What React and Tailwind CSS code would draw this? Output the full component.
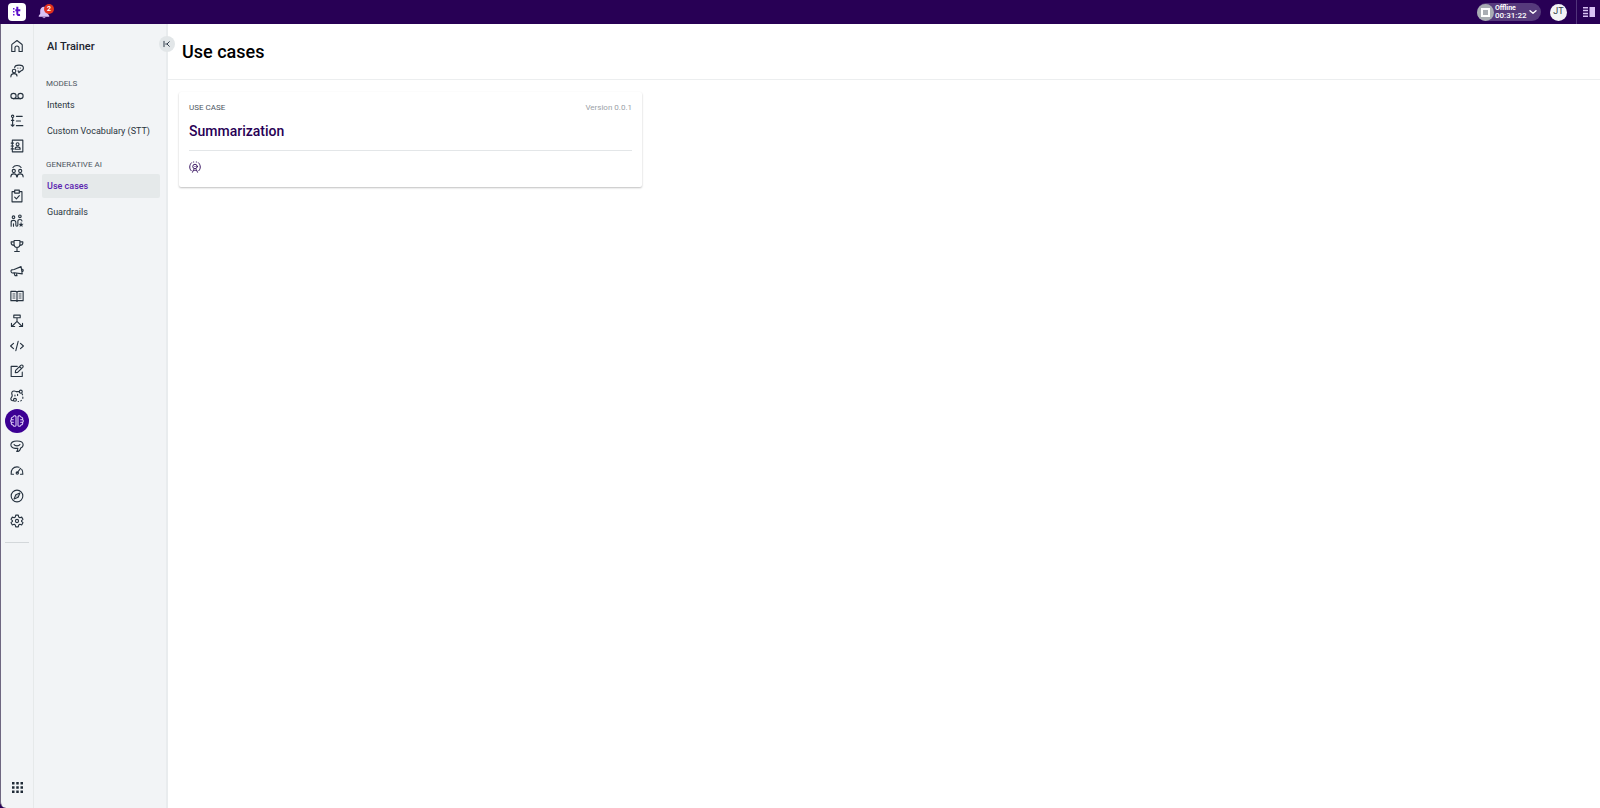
import React from "react";

function Icon({ children, className = "size-3.5", strokeWidth = 1.9 }) {
  return (
    <svg
      viewBox="0 0 24 24"
      className={className}
      fill="none"
      stroke="currentColor"
      strokeWidth={strokeWidth}
      strokeLinecap="round"
      strokeLinejoin="round"
      aria-hidden="true"
    >
      {children}
    </svg>
  );
}

const railItems = [
  {
    label: "Home",
    icon: <path d="M3 10.500c0-.7.300-1.200.8-1.600L12 2.500l8.200 6.400c.5.400.8.900.8 1.600V21.500h-5.500v-6a3.500 3.500 0 0 0-7 0v6H3z" />,
  },
  {
    label: "Conversations",
    icon: (
      <>
        <circle cx="7" cy="12" r="3" />
        <path d="M1.500 22c0-3.500 2-5.500 5.500-5.500s5 1.500 5 4" />
        <path d="M8 6.500C8 3.500 11 2 15.500 2S23 4 23 7s-1.500 4.500-4.500 5L15 15v-3h-1.500" />
        <path d="M13.500 7h.1M17.500 7h.1" />
      </>
    ),
  },
  {
    label: "Voicemail",
    icon: (
      <>
        <circle cx="6" cy="12" r="4.500" />
        <circle cx="18" cy="12" r="4.500" />
        <path d="M6 16.500h12" />
      </>
    ),
  },
  {
    label: "Queues",
    icon: (
      <>
        <circle cx="4.500" cy="4" r="2" />
        <path d="M4.500 6v15M2 18.500 4.500 21 7 18.500M2.500 11h4M11 4h10M11 12h7M11 20h11" />
      </>
    ),
  },
  {
    label: "Contacts",
    icon: (
      <>
        <path d="M4 2h18v20H4zM2 7h4M2 12h4M2 17h4" />
        <circle cx="13" cy="9" r="2.500" />
        <path d="M8.500 17.500c0-2.500 1.800-4 4.500-4s4.500 1.500 4.500 4z" />
      </>
    ),
  },
  {
    label: "Teams",
    icon: (
      <>
        <circle cx="6.500" cy="12" r="2.700" />
        <circle cx="17.500" cy="12" r="2.700" />
        <path d="M1.500 22c0-3.500 2-5 5-5s5 1.500 5 5M12.500 22c0-3.500 2-5 5-5s5 1.500 5 5M5 6c1.500-2.500 4-3.500 7-3.500S17.500 3.500 19 6" />
      </>
    ),
  },
  {
    label: "Tasks",
    icon: (
      <>
        <path d="M8 4.500H3.500V22h17V4.500H16" />
        <path d="M8 2h8v5H8zM8 14l3 3 5-5.500" />
      </>
    ),
  },
  {
    label: "Workforce",
    icon: (
      <>
        <circle cx="6" cy="5.500" r="2.200" />
        <circle cx="17" cy="4" r="2.200" />
        <path d="M2 21v-7c0-2 1.500-3 4-3s4 1 4 3v5c0 1.300.7 2 1.700 2s1.800-.7 1.800-2v-6.500c0-2 1.500-3 3.500-3s3.500 1 3.500 2.500M6 17v4" />
        <path d="m19 14.500 1 2.500 2.700.2-2 1.800.6 2.600-2.300-1.400-2.300 1.400.6-2.600-2-1.800 2.700-.2z" fill="currentColor" strokeWidth="0.500" />
      </>
    ),
  },
  {
    label: "Performance",
    icon: (
      <path d="M7 2.500h10v7c0 3-2 5-5 5s-5-2-5-5zM7 5H2v2c0 2.500 2 4 5 4M17 5h5v2c0 2.500-2 4-5 4M12 14.500V21M8 21.500h8" />
    ),
  },
  {
    label: "Campaigns",
    icon: (
      <path d="m19 4.500-12 5-4 .5c-1 .5-1.500 2-1.200 3.200S3 15.500 4 15.500l3.500-.5L21 17zM7 15.500l1.500 4.500h3.500l-1-4M20 8.500c2 0 2.700 1 2.700 2.200s-.7 2.300-2.200 2.300" />
    ),
  },
  {
    label: "Knowledge base",
    icon: (
      <>
        <path d="M1.500 4h8c1.500 0 2.500 1 2.500 2 0-1 1-2 2.500-2h8v16h-8c-1.500 0-2.500.5-2.500 1.500 0-1-1-1.500-2.500-1.500h-8zM12 6v15" />
        <path d="M5 8.500h3.500M5 12h3.500M5 15.500h3.500M15.500 8.500H19M15.500 12H19M15.500 15.500H19" strokeWidth="1.400" />
      </>
    ),
  },
  {
    label: "Flows",
    icon: (
      <path d="M6.500 2h11v4.500h-11zM12 6.500v6M12 12.500 3.500 21M12 12.500l8.500 8.500M2.500 16v5.500H8M21.500 16v5.500H16" />
    ),
  },
  {
    label: "Developers",
    icon: <path d="m6 7.500-5 4.500 5 4.500M18 7.500l5 4.500-5 4.500M14 4l-4 16" />,
  },
  {
    label: "Builder",
    icon: (
      <path d="M12.500 4H2v17.500h19V14M9 15l.7-4L18.500 2.500c1-1 2.500-1 3.300 0s.8 2.300 0 3.200L13 14.300zM16.500 4.500l3.300 3.300" />
    ),
  },
  {
    label: "Integrations",
    icon: (
      <>
        <path d="M11 4.500C6 2 2.500 4 3 7.500s2 4-.5 7 0 6 3.500 5.500" />
        <circle cx="18.500" cy="4.500" r="2.500" />
        <circle cx="8.500" cy="18.500" r="2.500" />
        <path d="M11 4.500h5M8.500 12v-1.500M13 11V9M20.500 8l1 2M22 14v2M19.500 19.500l-1 .8M14.500 21.500h-.5" />
      </>
    ),
  },
  {
    label: "AI Trainer",
    active: true,
    icon: (
      <path d="M10.300 4.500c-.5-2.300-4.300-2.200-5 .5-2.800.3-3.800 2.800-2.800 5-1.800 1-1.800 3 0 4-1 2.200 0 4.700 2.800 5 .7 2.700 4.500 2.800 5 .5zM13.700 4.500c.5-2.300 4.300-2.200 5 .5 2.800.3 3.800 2.800 2.800 5 1.800 1 1.800 3 0 4 1 2.200 0 4.700-2.800 5-.7 2.700-4.500 2.800-5 .5zM2.500 10h3.300M2.500 14h3.300M21.500 10h-3.300M21.500 14h-3.300" />
    ),
  },
  {
    label: "Virtual agent",
    icon: (
      <path d="M12 3.500c-6 0-10.500 2.300-10.500 6.300 0 3.700 3.500 5.700 7.500 6.200h4.500c0 2-.8 3.800-2 5.500 4 0 6-2.500 6.700-6 2.800-1 4.300-3 4.300-5.700 0-4-4.500-6.300-10.500-6.300zM7 9.500c1.500 3 8.500 3 10 0" />
    ),
  },
  {
    label: "Dashboards",
    icon: (
      <path d="M2 17.500h4M2 17c-.7-7 3.500-12 10-12 1.500 0 2.500.2 3.500.7M20 9c1.500 2 2.200 5 2 8.500h-4M12.500 15 18 7.500M12.500 13.500a2 2 0 1 0 0 4 2 2 0 0 0 0-4" />
    ),
  },
  {
    label: "Explore",
    icon: (
      <>
        <circle cx="12" cy="12" r="10" />
        <path d="m17 7-3 7-7 3 3-7zM12 12h.1" />
      </>
    ),
  },
  {
    label: "Settings",
    icon: (
      <>
        <path d="M9.800 2h4.400l.7 3.200 2 1.200 3.100-1 2.200 3.800-2.400 2.200v1.300l2.400 2.200-2.200 3.800-3.100-1-2 1.200-.7 3.200H9.800l-.7-3.200-2-1.200-3.100 1-2.200-3.800 2.400-2.200v-1.300L1.800 9.200 4 5.400l3.100 1 2-1.200z" />
        <circle cx="12" cy="12" r="2.700" />
      </>
    ),
  },
];

const navGroups = [
  { title: "MODELS", items: ["Intents", "Custom Vocabulary (STT)"] },
  { title: "GENERATIVE AI", items: ["Use cases", "Guardrails"] },
];

function TopBar() {
  return (
    <header className="flex h-6 shrink-0 items-center bg-[#280055] pl-2">
      <a href="#home" aria-label="Home" className="flex size-[18px] items-center justify-center rounded bg-white">
        <svg viewBox="0 0 18 18" className="size-[18px]" aria-hidden="true">
          <g fill="#6a14d8">
            <rect x="5" y="5" width="1.500" height="1.500" />
            <rect x="5" y="8" width="1.500" height="1.500" />
            <rect x="5" y="11" width="1.500" height="1.500" />
          </g>
          <path d="M7.300 7.200h5M9.300 3.700v6.800c0 1.200.7 1.700 2.700 1.500" fill="none" stroke="#5a0fc8" strokeWidth="2" />
        </svg>
      </a>
      <button type="button" aria-label="Notifications" className="relative ml-[11px] flex size-3.5 items-center justify-center">
        <svg viewBox="0 0 24 24" className="size-3.5 text-[#d9c2f5]" fill="currentColor" aria-hidden="true">
          <path d="M12 3c-4 0-6.500 3-6.500 7v5L3 18.500V20h18v-1.500L18.500 15v-5c0-4-2.500-7-6.500-7zM9.500 21c.5 2 4.500 2 5 0z" />
        </svg>
        <span className="absolute -top-px left-[7px] flex size-2.5 items-center justify-center rounded-full bg-[#e0301e] text-[7px] font-bold text-white">
          2
        </span>
      </button>
      <div className="ml-auto flex h-full items-center">
        <button type="button" className="flex h-[18px] items-center rounded-full bg-[#563a7c] pr-1 text-white">
          <span className="flex size-[17px] items-center justify-center rounded-full bg-[#a9adb3]">
            <span className="size-[9px] border-2 border-white" />
          </span>
          <span className="w-[35px] pl-px text-left text-[7px] leading-[7px] font-bold">
            <span className="block">Offline</span>
            <span className="block text-[8px] leading-[8px] font-medium">00:31:22</span>
          </span>
          <Icon className="size-2" strokeWidth={4}>
            <path d="m3 8 9 8 9-8" />
          </Icon>
        </button>
        <button type="button" aria-label="Account" className="ml-[9px] flex size-[17px] items-center justify-center rounded-full bg-[#f3f4f6] text-[9px] text-[#333b45]">
          JT
        </button>
        <button type="button" aria-label="Side panel" className="ml-[9px] flex h-full w-6 items-center justify-center border-l border-[#51347a]">
          <svg viewBox="0 0 12 10" className="h-2.5 w-3 text-[#d9c2f5]" fill="currentColor" aria-hidden="true">
            <path d="M0 0h5v1.500H0zM0 2.800h5v1.500H0zM0 5.700h5v1.500H0zM0 8.500h5V10H0zM6.500 0H12v10H6.500z" />
          </svg>
        </button>
      </div>
    </header>
  );
}

function Rail() {
  return (
    <nav aria-label="Main" className="flex w-[34px] shrink-0 flex-col items-center rounded-bl-md border-r border-l border-r-[#e6e9ea] border-l-[#6f6781] bg-[#f2f4f6] pt-[9px] pb-[15px]">
      {railItems.map((item) => (
        <a
          key={item.label}
          href="#"
          aria-label={item.label}
          className={
            item.active
              ? "flex h-[25px] w-6 items-center justify-center text-[#e0d0f8]"
              : "flex h-[25px] w-6 items-center justify-center text-[#26323f]"
          }
        >
          {item.active ? (
            <span className="flex size-6 items-center justify-center rounded-full bg-[#3c0094]">
              <Icon strokeWidth={1.8}>{item.icon}</Icon>
            </span>
          ) : (
            <Icon>{item.icon}</Icon>
          )}
        </a>
      ))}
      <hr className="mt-[9px] w-6 border-[#d3d7da]" />
      <button type="button" aria-label="All apps" className="mt-auto">
        <svg viewBox="0 0 11 11" className="size-[11px] text-[#1f2a36]" fill="currentColor" aria-hidden="true">
          <path d="M0 0h2.500v2.500H0zM4.250 0h2.500v2.500h-2.500zM8.500 0H11v2.500H8.500zM0 4.250h2.500v2.500H0zM4.250 4.250h2.500v2.500h-2.500zM8.500 4.250H11v2.500H8.500zM0 8.500h2.500V11H0zM4.250 8.500h2.500V11h-2.500zM8.500 8.500H11V11H8.500z" />
        </svg>
      </button>
    </nav>
  );
}

function SidePanel() {
  return (
    <aside className="relative w-[134px] shrink-0 border-r-2 border-[#e9ecee] bg-[#f2f4f6] pt-[15px] pr-1.5 pl-2">
      <h2 className="pl-[5px] text-[11px] leading-4 font-medium text-[#1d2530]">AI Trainer</h2>
      <button
        type="button"
        aria-label="Collapse menu"
        className="absolute top-3 -right-[9px] flex size-4 items-center justify-center rounded-full bg-[#e2e6e8] text-[#26323f]"
      >
        <Icon className="size-2" strokeWidth={2.8}>
          <path d="M3 4v16M19 5l-7 7 7 7M12 12H8" />
        </Icon>
      </button>
      <div className="flex flex-col gap-[15px] pt-[22px]">
        {navGroups.map((group) => (
          <section key={group.title}>
            <h3 className="pl-1 text-[8px] leading-[14px] text-[#4d565f]">{group.title}</h3>
            <ul className="flex flex-col gap-0.5 pt-0.5">
              {group.items.map((item) => (
                <li key={item}>
                  <a
                    href="#"
                    className={
                      item === "Use cases"
                        ? "block rounded-xs bg-[#e5e9ea] px-[5px] text-[9px] leading-6 font-medium text-[#5b1fb0]"
                        : "block rounded-xs px-[5px] text-[9px] leading-6 text-[#2a3440]"
                    }
                  >
                    {item}
                  </a>
                </li>
              ))}
            </ul>
          </section>
        ))}
      </div>
    </aside>
  );
}

function UseCaseCard() {
  return (
    <article className="w-[463px] max-w-full rounded-xs bg-white px-2.5 pt-[9px] pb-3.5 shadow-[0_1px_2px_rgba(0,0,0,0.25)]">
      <div className="flex items-center justify-between text-[8px] leading-[14px]">
        <span className="text-[#4d565f]">USE CASE</span>
        <span className="text-[#9ba1a7]">Version 0.0.1</span>
      </div>
      <h2 className="border-b border-[#e3e6e8] pt-[7px] pb-2.5 text-sm leading-[18px] font-medium text-[#280055]">Summarization</h2>
      <div className="pt-2.5 text-[#280055]">
        <Icon className="size-3" strokeWidth={1.8}>
          <path d="M5 3.500C3 5.500 1.500 8.500 1.500 12s1 5.500 3 7.500M19 3.500c2 2 3.500 5 3.500 8.500s-1 5.500-3 7.500M9 2h.5M14.500 2h.5" />
          <circle cx="12" cy="11" r="4.500" />
          <path d="M12 10.800v.4M7 22.500l2-4.500M17 22.500 15 18M9 18c2 1 4 1 6 0" />
        </Icon>
      </div>
    </article>
  );
}

export default function App() {
  return (
    <div className="flex min-h-screen flex-col bg-[#280055] font-[Roboto,sans-serif]">
      <TopBar />
      <div className="flex grow">
        <Rail />
        <SidePanel />
        <main className="min-w-0 grow bg-white">
          <div className="border-b border-[#eceeef] px-3.5 pt-[15px] pb-[15px]">
            <h1 className="text-lg leading-[25px] font-medium text-black">Use cases</h1>
          </div>
          <div className="py-3 pl-[11px] pr-3">
            <UseCaseCard />
          </div>
        </main>
      </div>
    </div>
  );
}
